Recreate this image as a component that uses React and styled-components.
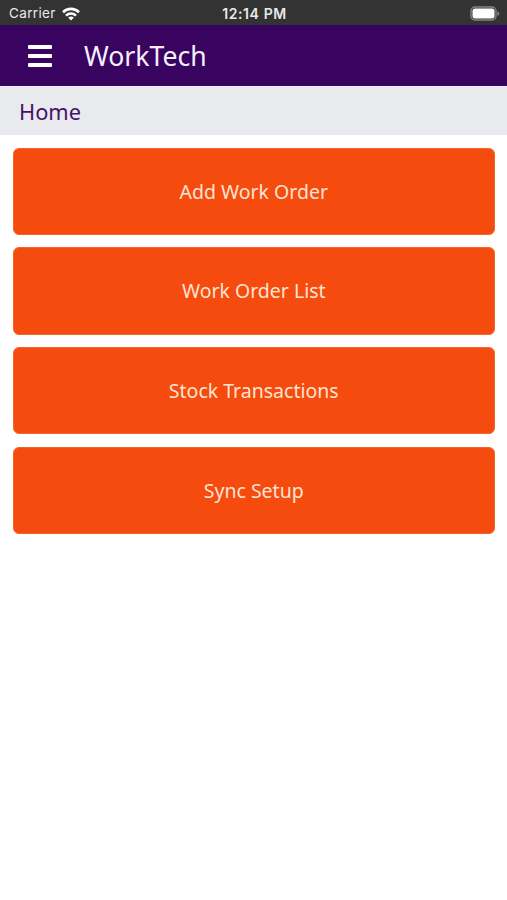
import styled, { createGlobalStyle } from "styled-components";

const GlobalStyle = createGlobalStyle`
  * {
    box-sizing: border-box;
  }

  body {
    margin: 0;
    background-color: white;
    font-family: "Noto Sans", sans-serif;
  }
`;

const Screen = styled.div`
  min-height: 900px;
  display: flex;
  flex-direction: column;
  background-color: white;
`;

const StatusBar = styled.div`
  height: 25px;
  padding: 2px 7px 0 9px;
  display: grid;
  grid-template-columns: 1fr auto 1fr;
  align-items: center;
  background-color: #333333;
  color: #e9e9e9;
  font-family: Inter, sans-serif;
  font-size: 13.5px;
  line-height: 23px;
`;

const Carrier = styled.div`
  display: flex;
  align-items: center;
  gap: 6px;
  letter-spacing: 0.35px;
`;

const Clock = styled.div`
  font-size: 14px;
  font-weight: 600;
  letter-spacing: 0.6px;
`;

const BatteryIcon = styled.svg`
  justify-self: end;
`;

const Header = styled.header`
  height: 61px;
  padding-left: 28px;
  display: flex;
  align-items: center;
  gap: 32px;
  background-color: #380460;
`;

const MenuButton = styled.button`
  width: 24px;
  height: 22px;
  padding: 0;
  border: none;
  display: flex;
  flex-direction: column;
  justify-content: space-between;
  background: none;
  cursor: pointer;
`;

const MenuLine = styled.span`
  width: 24px;
  height: 4px;
  border-radius: 1px;
  background-color: white;
`;

const Title = styled.h1`
  margin: 0;
  color: #f6effb;
  font-size: 26.6px;
  font-weight: 400;
  line-height: 36px;
`;

const PageBar = styled.div`
  height: 49px;
  padding-left: 19px;
  display: flex;
  align-items: center;
  border-top: 1px solid #f3eff9;
  background-color: #e9eaee;
  color: #43136b;
  font-size: 21.8px;
`;

const Menu = styled.nav`
  padding: 12.6px 12.5px 0 13px;
  display: flex;
  flex-direction: column;
  gap: 12.4px;
`;

const MenuItem = styled.button`
  height: 87.3px;
  padding: 0;
  border: 1px solid #f5662f;
  border-radius: 6px;
  background-color: #f54b0e;
  color: #ffe4d2;
  font-family: inherit;
  font-size: 19.5px;
  cursor: pointer;
`;

const items = ["Add Work Order", "Work Order List", "Stock Transactions", "Sync Setup"];

const App = () => {
  return (
    <Screen>
      <GlobalStyle />
      <StatusBar>
        <Carrier>
          Carrier
          <svg width="18" height="14" viewBox="0 0 18 14" fill="none" stroke="white" strokeWidth="2.6">
            <path d="M1 5.2a11.4 11.4 0 0 1 16 0" />
            <path d="M4 8.6a7.1 7.1 0 0 1 10 0" />
            <path d="M9 13.6 6.2 10.8a4 4 0 0 1 5.6 0z" fill="white" stroke="none" />
          </svg>
        </Carrier>
        <Clock>12:14 PM</Clock>
        <BatteryIcon width="31" height="15" viewBox="0 0 31 15">
          <rect x="2" y="1" width="25" height="13" rx="4" fill="#333333" stroke="#858585" strokeWidth="1.4" />
          <rect x="3.5" y="2.5" width="22" height="10" rx="2.5" fill="white" />
          <path d="M28.4 5.2c2.6 1 2.6 3.6 0 4.6z" fill="#858585" />
        </BatteryIcon>
      </StatusBar>
      <Header>
        <MenuButton aria-label="Menu">
          <MenuLine />
          <MenuLine />
          <MenuLine />
        </MenuButton>
        <Title>WorkTech</Title>
      </Header>
      <PageBar>Home</PageBar>
      <Menu>
        {items.map((item) => (
          <MenuItem key={item}>{item}</MenuItem>
        ))}
      </Menu>
    </Screen>
  );
};

export default App;
